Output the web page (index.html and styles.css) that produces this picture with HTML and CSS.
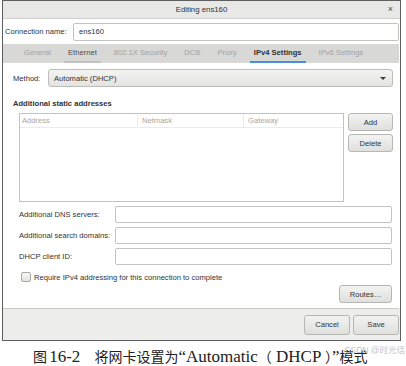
FILE: index.html
```html
<!DOCTYPE html>
<html lang="zh">
<head>
  <meta charset="UTF-8">
  <title>Editing ens160</title>
  <link rel="stylesheet" href="styles.css">
</head>
<body>
  <div class="window">
    <div class="titlebar">
      <span class="title">Editing ens160</span>
      <span class="close">×</span>
    </div>

    <div class="conn-row">
      <span class="conn-label">Connection name:</span>
      <div class="entry conn-entry">ens160</div>
    </div>

    <div class="notebook">
      <div class="tabs">
        <span class="tab">General</span>
        <span class="tab hover">Ethernet</span>
        <span class="tab">802.1X Security</span>
        <span class="tab">DCB</span>
        <span class="tab">Proxy</span>
        <span class="tab active">IPv4 Settings</span>
        <span class="tab">IPv6 Settings</span>
      </div>

      <div class="page">
        <div class="method-row">
          <span class="method-label">Method:</span>
          <div class="combo">
            <span>Automatic (DHCP)</span>
            <span class="arrow"></span>
          </div>
        </div>

        <div class="section-title">Additional static addresses</div>

        <div class="addr-area">
          <div class="addr-table">
            <div class="addr-head">
              <span class="col col-address">Address</span>
              <span class="col col-netmask">Netmask</span>
              <span class="col col-gateway">Gateway</span>
            </div>
          </div>
          <div class="side-buttons">
            <button class="btn">Add</button>
            <button class="btn">Delete</button>
          </div>
        </div>

        <div class="form-grid">
          <span class="form-label">Additional DNS servers:</span>
          <div class="entry"></div>
          <span class="form-label">Additional search domains:</span>
          <div class="entry"></div>
          <span class="form-label">DHCP client ID:</span>
          <div class="entry"></div>
        </div>

        <div class="check-row">
          <span class="checkbox"></span>
          <span>Require IPv4 addressing for this connection to complete</span>
        </div>

        <div class="routes-row">
          <button class="btn routes-btn">Routes…</button>
        </div>
      </div>
    </div>

    <div class="actions">
      <button class="btn action-btn">Cancel</button>
      <button class="btn action-btn">Save</button>
    </div>
  </div>

  <div class="caption">
    <span class="watermark">CSDN @时光话</span>
    <span class="cjk">图</span> <span class="latin">16-2</span>
    <span class="cjk fig-text">将网卡设置为</span><span class="latin">“Automatic</span><span class="cjk">（</span><span class="latin"> DHCP </span><span class="cjk">）</span><span class="latin">”</span><span class="cjk">模式</span>
  </div>
</body>
</html>
```

FILE: styles.css
```css
body {
  margin: 0;
  background-color: #ffffff;
  font-family: "Liberation Sans", Arial, sans-serif;
  font-size: 7.6px;
  color: #2e3436;
}

.window {
  margin-left: 2px;
  width: 399px;
  height: 341px;
  border: 1px solid #5e5e5e;
  box-sizing: border-box;
  display: flex;
  flex-direction: column;
  background-color: #ffffff;
}

.titlebar {
  position: relative;
  height: 17px;
  background-color: #e8e8e7;
  border-bottom: 1px solid #cfcfcd;
  display: flex;
  align-items: center;
  justify-content: center;
  flex-shrink: 0;
}

.title {
  font-size: 7.8px;
  color: #2e3436;
}

.close {
  position: absolute;
  right: 7px;
  top: 3px;
  font-size: 9px;
  color: #4a4a4a;
}

/* connection name */
.conn-row {
  display: flex;
  align-items: center;
  height: 25px;
  padding-left: 2px;
  padding-right: 1px;
  flex-shrink: 0;
}

.conn-label {
  width: 68px;
}

.entry {
  height: 17px;
  border: 1px solid #c3c3c0;
  border-radius: 2px;
  background-color: #ffffff;
  box-sizing: border-box;
  display: flex;
  align-items: center;
  padding-left: 5px;
}

.conn-entry {
  flex: 1;
  height: 18px;
}

/* tabs */
.notebook {
  flex: 1;
  display: flex;
  flex-direction: column;
  margin-right: 1px;
}

.tabs {
  height: 19px;
  background-color: #d8d8d7;
  display: flex;
  align-items: stretch;
  padding-left: 20px;
  gap: 15px;
  flex-shrink: 0;
}

.tab {
  display: flex;
  align-items: center;
  padding: 0 1px;
  color: #a3a3a2;
  border-bottom: 2px solid transparent;
  white-space: nowrap;
}

.tab.hover {
  color: #4a4f50;
  border-bottom-color: #c2c2c0;
  padding: 0 4px;
  margin: 0 -3px;
}

.tab.active {
  color: #2e3436;
  font-weight: bold;
  border-bottom-color: #4a90d9;
  padding: 0 4px;
  margin: 0 -3px;
}

.page {
  flex: 1;
  padding: 6px 6px 0 10px;
  display: flex;
  flex-direction: column;
  border-bottom: 1px solid #c9c9c6;
}

.method-row {
  display: flex;
  align-items: center;
  height: 18px;
}

.method-label {
  width: 35px;
}

.combo {
  flex: 1;
  height: 18px;
  box-sizing: border-box;
  border: 1px solid #bcbcb9;
  border-radius: 3px;
  background: linear-gradient(#f4f4f3, #e3e3e1);
  display: flex;
  align-items: center;
  justify-content: space-between;
  padding: 0 6px 0 5px;
}

.arrow {
  width: 0;
  height: 0;
  border-left: 3px solid transparent;
  border-right: 3px solid transparent;
  border-top: 3px solid #3a3a3a;
}

.section-title {
  font-weight: bold;
  margin-top: 12px;
  height: 10px;
  line-height: 10px;
}

/* addresses */
.addr-area {
  display: flex;
  margin-top: 4px;
  margin-left: 6px;
  gap: 4px;
}

.addr-table {
  width: 326px;
  height: 89px;
  border: 1px solid #c3c3c0;
  box-sizing: border-box;
}

.addr-head {
  display: flex;
  height: 13px;
  border-bottom: 1px solid #ebebea;
  color: #a6a6a5;
}

.col {
  display: flex;
  align-items: center;
  padding-left: 2px;
  border-right: 1px solid #ebebea;
}

.col-address { width: 115px; }
.col-netmask { width: 101px; padding-left: 4px; }
.col-gateway { flex: 1; border-right: none; padding-left: 4px; }

.side-buttons {
  display: flex;
  flex-direction: column;
  gap: 3px;
}

.btn {
  font-family: "Liberation Sans", Arial, sans-serif;
  font-size: 7.6px;
  color: #2e3436;
  border: 1px solid #b6b6b3;
  border-radius: 3px;
  background: linear-gradient(#f3f3f2, #dfdfdd);
  padding: 0;
  cursor: pointer;
}

.side-buttons .btn {
  width: 45px;
  height: 18px;
}

/* form */
.form-grid {
  display: grid;
  grid-template-columns: 96px 1fr;
  row-gap: 4px;
  align-items: center;
  margin-top: 4px;
  margin-left: 6px;
  margin-right: 1px;
}

.form-label {
  white-space: nowrap;
}

.check-row {
  display: flex;
  align-items: center;
  gap: 3px;
  margin-top: 7px;
  margin-left: 8px;
}

.checkbox {
  width: 8px;
  height: 8px;
  border: 1px solid #a8a8a6;
  border-radius: 2px;
  background: linear-gradient(#f6f6f5, #e2e2e0);
}

.routes-row {
  display: flex;
  justify-content: flex-end;
  margin-top: 3px;
  margin-right: 1px;
}

.routes-btn {
  width: 53px;
  height: 18px;
}

/* bottom buttons */
.actions {
  height: 31px;
  background-color: #ededec;
  display: flex;
  justify-content: flex-end;
  align-items: center;
  gap: 3px;
  padding-right: 1px;
  flex-shrink: 0;
}

.action-btn {
  width: 46px;
  height: 20px;
}

/* figure caption */
.caption {
  position: relative;
  margin-top: 6px;
  padding-left: 33px;
  height: 18px;
  line-height: 18px;
  color: #222222;
  white-space: nowrap;
}

.cjk {
  font-family: "Noto Sans CJK SC", sans-serif;
  font-size: 14px;
}

.latin {
  font-family: "Liberation Serif", serif;
  font-size: 17px;
}

.fig-text {
  margin-left: 12px;
}

.watermark {
  position: absolute;
  right: 1px;
  top: -3px;
  font-family: "Liberation Sans", "Noto Sans CJK SC", sans-serif;
  font-size: 8.5px;
  line-height: 12px;
  color: #c4c4c4;
}
```
